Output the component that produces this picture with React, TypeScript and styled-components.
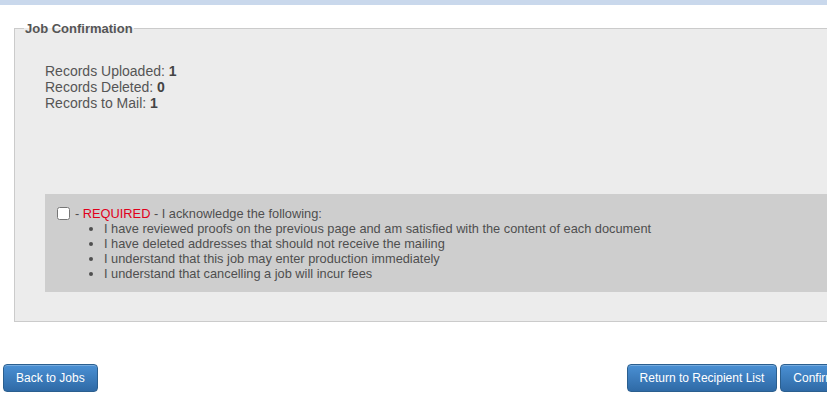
import React from "react";
import styled, { createGlobalStyle } from "styled-components";

const Global = createGlobalStyle`
  html, body { margin: 0; padding: 0; background: #fff; overflow: hidden; }
  body { font-family: "Liberation Sans", Arial, sans-serif; color: #555; }
`;

const Page = styled.div`
  width: 827px;
  height: 411px;
  overflow: hidden;
  display: flex;
  flex-direction: column;
`;

const TopBar = styled.div`
  height: 5px;
  background: #c9d8ec;
  flex: none;
`;

const Fieldset = styled.fieldset`
  margin: 16px 0 0 14px;
  width: 900px;
  box-sizing: border-box;
  border: 1px solid #cbcbcb;
  background: #ececec;
  padding: 0;
  min-inline-size: auto;
`;

const Legend = styled.legend`
  font-size: 13px;
  font-weight: bold;
  color: #555;
  padding: 0 1px;
  margin-left: 9px;
`;

const Body = styled.div`
  padding: 27px 0 29px 30px;
`;

const Stats = styled.div`
  font-size: 14px;
  line-height: 16px;
  color: #555;
  margin-bottom: 83px;
`;

const Num = styled.b`
  color: #444;
`;

const AckBox = styled.div`
  background: #cecece;
  padding: 12px 0 11px 12px;
  font-size: 12.8px;
  line-height: 15px;
  color: #4f4f4f;
`;

const AckHead = styled.label`
  display: flex;
  align-items: center;
  gap: 5px;
`;

const Check = styled.input`
  margin: 0;
  width: 13px;
  height: 13px;
`;

const Required = styled.span`
  color: #e0001b;
`;

const List = styled.ul`
  margin: 0;
  padding-left: 47px;
  list-style: disc;
`;

const Footer = styled.div`
  display: flex;
  justify-content: space-between;
  margin-top: 42px;
  padding-left: 3px;
  width: 900px;
`;

const Group = styled.div`
  display: flex;
  gap: 3px;
  margin-right: 32px;
`;

const Button = styled.button`
  height: 28px;
  padding: 0 12px;
  border: 1px solid #2b5f8f;
  border-radius: 4px;
  background: linear-gradient(#4a90d4, #2f6aa6);
  color: #fff;
  font-family: "Liberation Sans", Arial, sans-serif;
  font-size: 12px;
  box-shadow: inset 0 1px 0 rgba(255,255,255,0.25);
  cursor: pointer;
`;

export default function App() {
  return (
    <Page>
      <Global />
      <TopBar />
      <Fieldset>
        <Legend>Job Confirmation</Legend>
        <Body>
          <Stats>
            Records Uploaded: <Num>1</Num>
            <br />
            Records Deleted: <Num>0</Num>
            <br />
            Records to Mail: <Num>1</Num>
          </Stats>
          <AckBox>
            <AckHead>
              <Check type="checkbox" />
              <span>
                - <Required>REQUIRED</Required> - I acknowledge the following:
              </span>
            </AckHead>
            <List>
              <li>I have reviewed proofs on the previous page and am satisfied with the content of each document</li>
              <li>I have deleted addresses that should not receive the mailing</li>
              <li>I understand that this job may enter production immediately</li>
              <li>I understand that cancelling a job will incur fees</li>
            </List>
          </AckBox>
        </Body>
      </Fieldset>
      <Footer>
        <Button>Back to Jobs</Button>
        <Group>
          <Button>Return to Recipient List</Button>
          <Button>Confirm Job</Button>
        </Group>
      </Footer>
    </Page>
  );
}
